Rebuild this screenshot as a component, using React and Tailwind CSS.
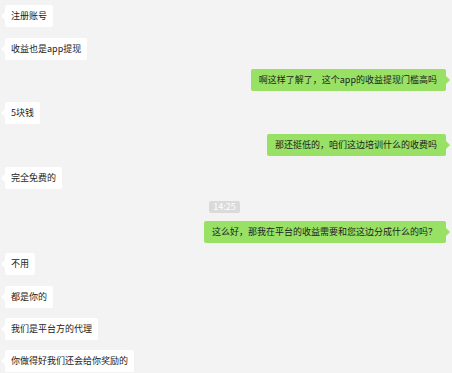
import React from 'react';

const messages = [
  { side: 'left', text: '注册账号', mt: 'mt-[5px]' },
  { side: 'left', text: '收益也是app提现', mt: 'mt-[11px]' },
  { side: 'right', text: '啊这样了解了，这个app的收益提现门槛高吗', mt: 'mt-[9px]' },
  { side: 'left', text: '5块钱', mt: 'mt-[11px]' },
  { side: 'right', text: '那还挺低的，咱们这边培训什么的收费吗', mt: 'mt-[10px]' },
  { side: 'left', text: '完全免费的', mt: 'mt-[11px]' },
  { side: 'time', text: '14:25', mt: 'mt-[12px]' },
  { side: 'right', text: '这么好，那我在平台的收益需要和您这边分成什么的吗？', mt: 'mt-[8px]' },
  { side: 'left', text: '不用', mt: 'mt-[10px]' },
  { side: 'left', text: '都是你的', mt: 'mt-[11px]' },
  { side: 'left', text: '我们是平台方的代理', mt: 'mt-[10px]' },
  { side: 'left', text: '你做得好我们还会给你奖励的', mt: 'mt-[10px]' },
];

function Bubble({ side, text, mt }) {
  if (side === 'time') {
    return (
      <div className={`${mt} flex justify-center pr-[3px]`}>
        <span className="h-[12px] leading-[12px] px-[4px] rounded-[2px] bg-[#dadada] text-white text-[9px]">
          {text}
        </span>
      </div>
    );
  }
  const isLeft = side === 'left';
  return (
    <div className={`${mt} flex ${isLeft ? 'justify-start pl-[5px]' : 'justify-end pr-[6px]'}`}>
      <div
        className={`relative h-[22px] leading-[22px] rounded-[2px] text-[9px] text-[#222] whitespace-nowrap ${
          isLeft ? 'px-[6px] bg-white' : 'pl-[8px] pr-[9px] bg-[#98e165]'
        }`}
      >
        <span
          className={`absolute top-[7px] w-0 h-0 border-y-[4px] border-y-transparent ${
            isLeft
              ? 'left-[-4px] border-r-[4px] border-r-white'
              : 'right-[-4px] border-l-[4px] border-l-[#98e165]'
          }`}
        />
        {text}
      </div>
    </div>
  );
}

export default function App() {
  return (
    <div
      className="w-[452px] h-[373px] overflow-hidden bg-[#f3f3f3] flex flex-col"
      style={{ fontFamily: '"Noto Sans CJK SC", "Noto Sans", sans-serif' }}
    >
      {messages.map((m, i) => (
        <Bubble key={i} {...m} />
      ))}
    </div>
  );
}
